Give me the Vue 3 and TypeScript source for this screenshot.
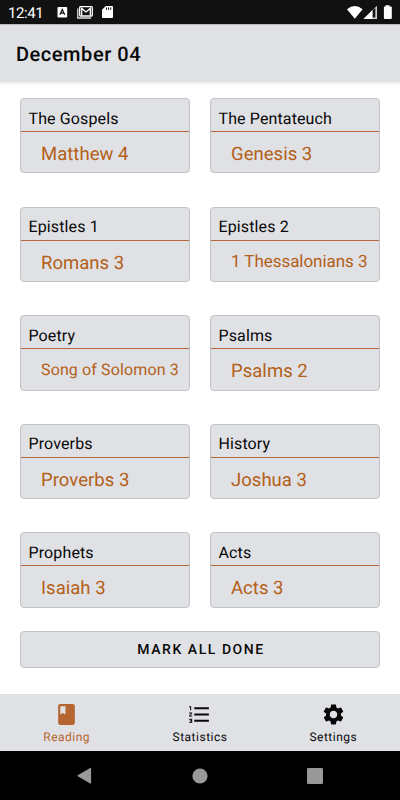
<script setup lang="ts">
interface ReadingList {
  title: string
  passage: string
  size?: 'medium' | 'small'
}

const lists: ReadingList[] = [
  { title: 'The Gospels', passage: 'Matthew 4' },
  { title: 'The Pentateuch', passage: 'Genesis 3' },
  { title: 'Epistles 1', passage: 'Romans 3' },
  { title: 'Epistles 2', passage: '1 Thessalonians 3', size: 'medium' },
  { title: 'Poetry', passage: 'Song of Solomon 3', size: 'small' },
  { title: 'Psalms', passage: 'Psalms 2' },
  { title: 'Proverbs', passage: 'Proverbs 3' },
  { title: 'History', passage: 'Joshua 3' },
  { title: 'Prophets', passage: 'Isaiah 3' },
  { title: 'Acts', passage: 'Acts 3' },
]
</script>

<template>
  <div class="screen">
    <div class="status">
      <span class="clock">12:41</span>
      <svg class="s-left" width="60" height="14" viewBox="0 0 60 14">
        <rect x="0.5" y="2" width="9.7" height="10.5" rx="1" fill="#fff" />
        <path d="M2.9 9.8 5.3 4.4 7.7 9.8M3.8 8.1H6.8" fill="none" stroke="#111" stroke-width="1.2" />
        <path d="M20.8 3.6V13H34" fill="none" stroke="#ddd" stroke-width="1.3" />
        <rect x="22.7" y="1.6" width="12.6" height="9.4" rx="0.8" fill="#111" stroke="#fff" stroke-width="1.3" />
        <path d="M24.7 10.5V3.4L29 7 33.3 3.4V10.5" fill="none" stroke="#fff" stroke-width="1.3" />
        <path d="M48.8 1H55q1 0 1 1V12q0 1-1 1H46q-1 0-1-1V4.8Z" fill="#fff" />
        <path d="M49.5 2.4V4.8M51.6 2.4V4.8M53.7 2.4V4.8" stroke="#111" stroke-width="1" />
      </svg>
      <svg class="s-right" width="46" height="15" viewBox="0 0 46 15">
        <path d="M0 4.2Q7.8-2.2 15.6 4.2L7.8 13.7Z" fill="#fff" />
        <path d="M16.5 14 30 .8V14Z" fill="#ccc" />
        <path d="M16.5 14 25.5 5V14Z" fill="#fff" />
        <path d="M25.7 5.3 28.3 3V12.5H25.7Z" fill="#111" />
        <path d="M38.5.2H42.5V1.5H44q.8 0 .8.8V13q0 .9-.8.9H37.7q-.8 0-.8-.9V2.3q0-.8.8-.8H38.5Z" fill="#fff" />
      </svg>
    </div>

    <header class="header">December 04</header>

    <main class="content">
      <div class="grid">
        <section v-for="item in lists" :key="item.title" class="card">
          <h2 class="title">{{ item.title }}</h2>
          <p class="passage" :class="item.size">{{ item.passage }}</p>
        </section>
      </div>
      <button class="done" type="button">MARK ALL DONE</button>
    </main>

    <nav class="tabs">
      <a class="tab active">
        <svg width="25" height="25" viewBox="0 0 24 24">
          <path fill="currentColor" d="M18 2H6c-1.100 0-2 .9-2 2v16c0 1.100.9 2 2 2h12c1.100 0 2-.9 2-2V4c0-1.100-.9-2-2-2zM6 4h5v8l-2.500-1.500L6 12V4z" />
        </svg>
        <span>Reading</span>
      </a>
      <a class="tab">
        <svg width="25" height="25" viewBox="0 0 24 24">
          <path fill="currentColor" d="M2 17h2v.5H3v1h1v.5H2v1h3v-4H2v1zm1-9h1V4H2v1h1v3zm-1 3h1.800L2 13.100v.9h3v-1H3.200L5 10.900V10H2v1zm5-6v2h14V5H7zm0 14h14v-2H7v2zm0-6h14v-2H7v2z" />
        </svg>
        <span>Statistics</span>
      </a>
      <a class="tab">
        <svg width="25" height="25" viewBox="0 0 24 24">
          <path fill="currentColor" d="M19.140 12.940c.04-.3.060-.61.060-.94 0-.32-.02-.64-.07-.94l2.030-1.580c.18-.14.23-.41.120-.61l-1.920-3.320c-.12-.22-.37-.29-.59-.22l-2.390.96c-.5-.38-1.030-.7-1.620-.94L14.400 2.810c-.04-.24-.24-.41-.48-.41h-3.840c-.24 0-.43.17-.47.41L9.250 5.350c-.59.24-1.130.57-1.620.94l-2.390-.96c-.22-.08-.47 0-.59.22L2.740 8.870c-.12.21-.08.47.12.61l2.030 1.580c-.05.3-.09.63-.09.94s.02.64.07.94l-2.030 1.580c-.18.14-.23.41-.12.61l1.920 3.320c.12.22.37.29.59.22l2.390-.96c.5.38 1.030.7 1.620.94l.36 2.540c.05.24.24.41.48.41h3.840c.24 0 .44-.17.47-.41l.36-2.540c.59-.24 1.130-.56 1.620-.94l2.390.96c.22.08.47 0 .59-.22l1.920-3.320c.12-.22.07-.47-.12-.61l-2.010-1.580zM12 15.600c-1.980 0-3.600-1.620-3.600-3.600s1.620-3.600 3.600-3.600 3.600 1.620 3.600 3.600-1.620 3.600-3.600 3.600z" />
        </svg>
        <span>Settings</span>
      </a>
    </nav>

    <div class="system">
      <svg width="16" height="18" viewBox="0 0 16 18"><path d="M13.500 1.400 1 8.700 13.500 16Z" fill="#999" stroke="#999" stroke-width="1.200" stroke-linejoin="round" /></svg>
      <svg width="16" height="16" viewBox="0 0 16 16"><circle cx="8" cy="8" r="7.600" fill="#999" /></svg>
      <svg width="16" height="16" viewBox="0 0 16 16"><rect width="16" height="16" rx="1.200" fill="#999" /></svg>
    </div>
  </div>
</template>

<style>
body {
  margin: 0;
  background: #fff;
}
</style>

<style scoped>
.screen {
  width: 400px;
  height: 800px;
  display: flex;
  flex-direction: column;
  overflow: hidden;
  background: #fff;
  color: #080808;
  font-family: Roboto, "Liberation Sans", sans-serif;
  text-rendering: geometricPrecision;
}
.status {
  box-sizing: border-box;
  height: 24px;
  flex: none;
  display: flex;
  align-items: flex-start;
  padding: 5px 7px 0 8px;
  background: #111;
  color: #fff;
}
.clock {
  width: 49px;
  font-size: 15px;
  line-height: 16px;
  letter-spacing: -0.4px;
}
.s-right {
  margin-left: auto;
}
.header {
  box-sizing: border-box;
  height: 58px;
  flex: none;
  padding-left: 16px;
  border-top: 1px solid #b8b8ba;
  background: #e0e1e5;
  box-shadow: 0 1px 3px rgba(0, 0, 0, 0.12);
  font-size: 20px;
  font-weight: 500;
  line-height: 59px;
  letter-spacing: 0.550px;
}
.content {
  flex: 1;
  padding: 16px 20px 0;
}
.grid {
  display: grid;
  grid-template-columns: 170px 170px;
  grid-auto-rows: 75.400px;
  column-gap: 20px;
  row-gap: 33.200px;
}
.card {
  box-sizing: border-box;
  border: 1px solid #c2c3c7;
  border-radius: 4px;
  background: #e0e1e5;
}
.title {
  box-sizing: border-box;
  height: 33px;
  margin: 0;
  padding: 6.600px 0 0 7.500px;
  border-bottom: 1px solid #b7653a;
  font-size: 16px;
  font-weight: 400;
  line-height: 25px;
  letter-spacing: 0.120px;
}
.passage {
  margin: 0;
  padding: 9.100px 0 0 20px;
  color: #b36018;
  font-size: 18.500px;
  line-height: 27px;
  letter-spacing: 0.030px;
  white-space: nowrap;
}
.passage.medium {
  font-size: 17px;
  line-height: 24px;
  letter-spacing: -0.050px;
}
.passage.small {
  font-size: 16px;
  line-height: 24px;
  letter-spacing: 0.130px;
}
.done {
  box-sizing: border-box;
  display: block;
  width: 360px;
  height: 37px;
  margin: 23px 0 0;
  padding: 2px 0 0 2px;
  border: 1px solid #c2c3c7;
  border-radius: 4px;
  background: #e0e1e5;
  color: #080808;
  font: 500 14px/22px Roboto, sans-serif;
  letter-spacing: 1.550px;
  text-rendering: geometricPrecision;
}
.tabs {
  box-sizing: border-box;
  height: 57px;
  flex: none;
  display: grid;
  grid-template-columns: repeat(3, 1fr);
  background: #e0e1e5;
}
.tab {
  display: flex;
  flex-direction: column;
  align-items: center;
  padding-top: 8px;
  font-size: 12px;
  line-height: 16px;
  letter-spacing: 0.5px;
}
.tab span {
  margin-top: 1.500px;
}
.tab.active {
  color: #b5652f;
}
.system {
  height: 49px;
  flex: none;
  display: flex;
  justify-content: center;
  align-items: center;
  gap: 99px;
  background: #000;
}
</style>
